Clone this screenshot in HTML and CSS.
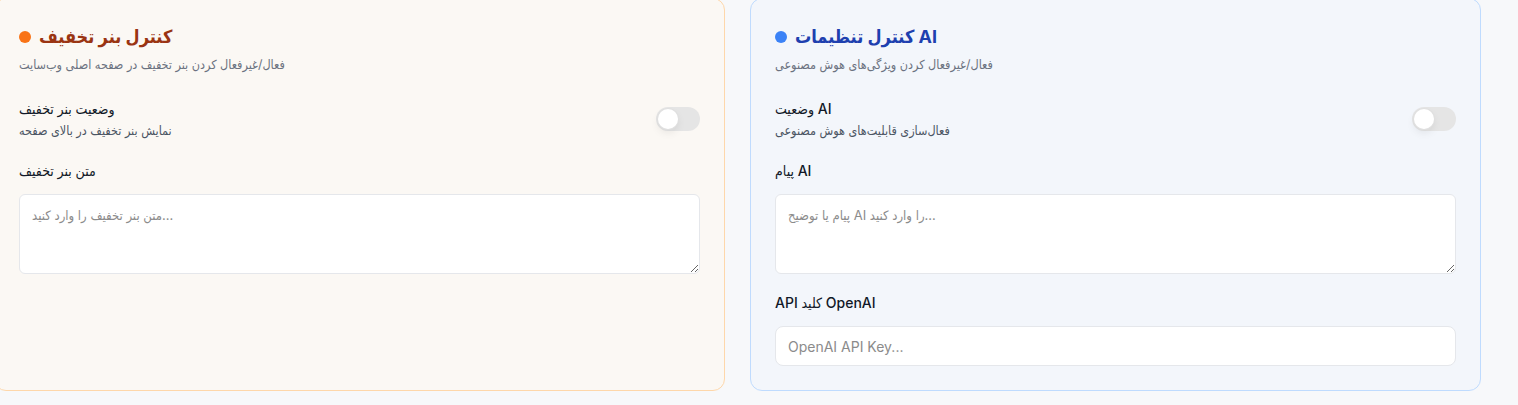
FILE: index.html
```html
<!DOCTYPE html>
<html lang="fa">
<head>
<meta charset="utf-8">
<title>تنظیمات</title>
<link rel="stylesheet" href="styles.css">
</head>
<body>
<div class="page">
  <section class="card card-orange">
    <div class="card-head">
      <h2 class="title"><span class="dot"></span>کنترل بنر تخفیف</h2>
      <p class="subtitle">فعال/غیرفعال کردن بنر تخفیف در صفحه اصلی وب‌سایت</p>
    </div>
    <div class="toggle-row">
      <div class="toggle-text">
        <div class="toggle-label">وضعیت بنر تخفیف</div>
        <div class="toggle-desc">نمایش بنر تخفیف در بالای صفحه</div>
      </div>
      <span class="switch"><span class="knob"></span></span>
    </div>
    <div class="field">
      <label class="field-label">متن بنر تخفیف</label>
      <textarea class="textarea" placeholder="متن بنر تخفیف را وارد کنید..."></textarea>
    </div>
  </section>

  <section class="card card-blue">
    <div class="card-head">
      <h2 class="title"><span class="dot"></span>کنترل تنظیمات AI</h2>
      <p class="subtitle">فعال/غیرفعال کردن ویژگی‌های هوش مصنوعی</p>
    </div>
    <div class="toggle-row">
      <div class="toggle-text">
        <div class="toggle-label">وضعیت AI</div>
        <div class="toggle-desc">فعال‌سازی قابلیت‌های هوش مصنوعی</div>
      </div>
      <span class="switch"><span class="knob"></span></span>
    </div>
    <div class="field">
      <label class="field-label">پیام AI</label>
      <textarea class="textarea" placeholder="پیام یا توضیح AI را وارد کنید..."></textarea>
    </div>
    <div class="field">
      <label class="field-label">API کلید OpenAI</label>
      <input class="input" type="text" placeholder="OpenAI API Key...">
    </div>
  </section>
</div>
</body>
</html>
```

FILE: styles.css
```css
* { box-sizing: border-box; }

html, body {
  margin: 0;
  padding: 0;
  background: #f7f8fa;
  font-family: Inter, "DejaVu Sans Condensed", "DejaVu Sans", sans-serif;
  color: #111827;
}

.page {
  display: grid;
  grid-template-columns: 731px 731px;
  column-gap: 25px;
  margin-left: -6px;
  margin-top: -2px;
  align-items: stretch;
}

.card {
  border: 1px solid;
  border-radius: 12px;
  padding: 24px;
  display: flex;
  flex-direction: column;
}

.card-orange {
  background: #fbf8f4;
  border-color: #fed7aa;
}

.card-blue {
  background: #f3f6fb;
  border-color: #bfdbfe;
}

.card-head {
  margin-bottom: 24px;
}

.title {
  display: flex;
  align-items: center;
  gap: 8px;
  margin: 0;
  font-size: 18px;
  line-height: 28px;
  font-weight: 700;
}

.card-orange .title { color: #9a3412; }
.card-blue .title { color: #1e40af; }

.dot {
  width: 12px;
  height: 12px;
  border-radius: 50%;
  flex: none;
}

.card-orange .dot { background: #f97316; }
.card-blue .dot { background: #3b82f6; }

.subtitle {
  margin: 4px 0 0;
  font-size: 12.5px;
  line-height: 20px;
  color: #6b7280;
}

.toggle-row {
  display: flex;
  align-items: center;
  justify-content: space-between;
}

.toggle-label {
  font-size: 14px;
  line-height: 20px;
  font-weight: 500;
  color: #111827;
}

.toggle-desc {
  margin-top: 4px;
  font-size: 12.5px;
  line-height: 16px;
  color: #4b5563;
}

.switch {
  width: 44px;
  height: 24px;
  border-radius: 12px;
  background: #e5e5e5;
  display: flex;
  align-items: center;
  padding: 2px;
  flex: none;
}

.knob {
  width: 20px;
  height: 20px;
  border-radius: 50%;
  background: #fff;
  box-shadow: 0 0 0 1px #e0e0e0, 0 4px 8px rgba(0, 0, 0, 0.08);
}

.field {
  display: flex;
  flex-direction: column;
  margin-top: 22px;
}

.field + .field {
  margin-top: 19px;
}

.field-label {
  font-size: 14px;
  line-height: 20px;
  font-weight: 500;
  color: #111827;
  margin-bottom: 13px;
}

.textarea,
.input {
  width: 100%;
  border: 1px solid #e5e7eb;
  background: #fff;
  font-family: Inter, "DejaVu Sans Condensed", "DejaVu Sans", sans-serif;
  color: #111827;
  outline: none;
}

.textarea {
  height: 80px;
  border-radius: 6px;
  padding: 10px 12px;
  font-size: 13px;
  line-height: 20px;
  resize: vertical;
  display: block;
}

.input {
  height: 40px;
  border-radius: 8px;
  padding: 0 12px;
  font-size: 14px;
}

.textarea::placeholder,
.input::placeholder {
  color: #8b8b8b;
}
```
